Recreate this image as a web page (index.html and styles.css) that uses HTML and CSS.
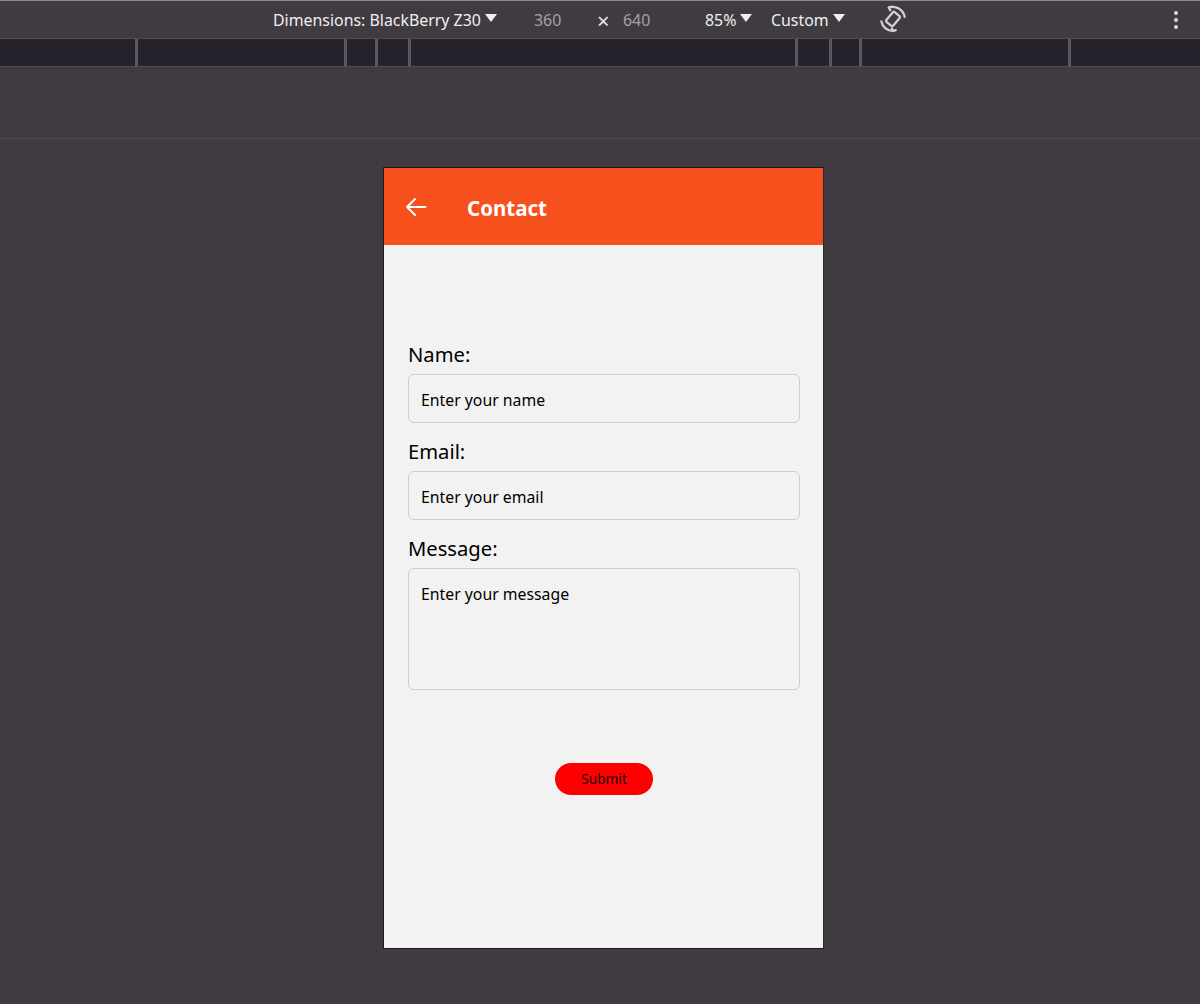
FILE: index.html
```html
<!DOCTYPE html>
<html lang="en">
<head>
<meta charset="utf-8">
<title>Contact</title>
<link rel="stylesheet" href="styles.css">
</head>
<body>
<header class="toolbar">
  <span class="tool tool-device">Dimensions: BlackBerry Z30<i class="caret"></i></span>
  <span class="dim dim-w">360</span>
  <span class="times">×</span>
  <span class="dim dim-h">640</span>
  <span class="tool tool-zoom">85%<i class="caret"></i></span>
  <span class="tool tool-throttle">Custom<i class="caret"></i></span>
  <svg class="rotate" width="26" height="28" viewBox="0 0 26 28" fill="none" stroke="#d2d0d3" stroke-width="2.3" stroke-linecap="round" stroke-linejoin="round">
    <rect x="8.6" y="7.6" width="8.8" height="12.8" rx="1.6" transform="rotate(40 13 14)"/>
    <path d="M8.8 2.6A12 12 0 0 1 24.6 11.8"/>
    <path d="M1.4 16.4A12 12 0 0 0 13.2 26"/>
    <path d="M11.6 1.6L8.8 2.6l1.4 2.6"/>
    <path d="M15.8 25.2L13.2 26l-1.2-2.6"/>
  </svg>
  <span class="more"><i></i><i></i><i></i></span>
</header>
<div class="ruler">
  <span class="seg seg-1"></span><span class="seg seg-2"></span><span class="seg seg-3"></span><span class="seg seg-4"></span><span class="seg seg-5"></span><span class="seg seg-6"></span><span class="seg seg-7"></span><span class="seg seg-8"></span>
</div>
<div class="spacer"></div>
<main class="stage">
  <section class="phone">
    <div class="appbar">
      <svg class="back" width="22" height="20" viewBox="0 0 22 20" fill="none" stroke="#fff" stroke-width="2" stroke-linecap="round" stroke-linejoin="round">
        <path d="M20.5 10H2M10 2l-8 8 8 8"/>
      </svg>
      <h1 class="title">Contact</h1>
    </div>
    <form class="form">
      <label class="label">Name:</label>
      <div class="field">Enter your name</div>
      <label class="label">Email:</label>
      <div class="field">Enter your email</div>
      <label class="label">Message:</label>
      <div class="field field-area">Enter your message</div>
      <div class="actions"><span class="submit">Submit</span></div>
    </form>
  </section>
</main>
</body>
</html>
```
FILE: styles.css
```css
* { box-sizing: border-box; }
html, body { margin: 0; height: 1004px; overflow: hidden; }
body { background: #3f3b40; font-family: "Noto Sans", "Open Sans", sans-serif; }

.toolbar {
  height: 39px;
  display: flex;
  align-items: center;
  padding: 0 0 0 273px;
  border-top: 1px solid #8d8b8f;
  border-bottom: 1px solid #4f4c51;
  color: #f0eff0;
  font-size: 15.9px;
}
.tool { display: flex; align-items: center; white-space: nowrap; }
.caret {
  display: block;
  width: 0; height: 0;
  margin: -3px 0 0 4px;
  border-left: 6px solid transparent;
  border-right: 6px solid transparent;
  border-top: 8px solid #f0eff0;
}
.tool-device { width: 261px; flex: none; }
.dim { color: #a3a1a5; flex: none; }
.dim-w { width: 63px; }
.times { color: #e8e7e9; width: 26px; flex: none; font-size: 22px; line-height: 20px; }
.dim-h { width: 82px; }
.tool-zoom { width: 66px; flex: none; }
.tool-throttle { width: 109px; flex: none; }
.rotate { flex: none; margin-top: -1px; }
.more { margin-left: 268px; display: flex; flex-direction: column; gap: 3px; }
.more i { display: block; width: 4px; height: 4px; border-radius: 50%; background: #d8d6d9; }

.ruler {
  height: 28px;
  display: flex;
  background: #26232c;
  border-bottom: 1px solid #4f4c51;
}
.seg { flex: none; border-right: 3px solid #5c5a60; height: 100%; }
.seg-1 { width: 138px; }
.seg-2 { width: 209px; }
.seg-3 { width: 31px; }
.seg-4 { width: 33px; }
.seg-5 { width: 387px; }
.seg-6 { width: 34px; }
.seg-7 { width: 30px; }
.seg-8 { width: 209px; }

.spacer { height: 72px; border-bottom: 1px solid #4f4c51; }

.stage { padding: 28px 0 0 383px; }
.phone {
  width: 441px;
  height: 782px;
  background: #f2f2f2;
  border: 1px solid #1c1a1e;
  border-right-color: #2a282c;
}
.appbar {
  height: 77px;
  background: #f6511d;
  display: flex;
  align-items: center;
  padding-left: 21px;
}
.back { flex: none; }
.title {
  margin: 2px 0 0 40px;
  color: #fff;
  font-size: 20.5px;
  font-weight: 700;
  line-height: 28px;
}

.form { padding: 94px 23px 0 24px; display: flex; flex-direction: column; color: #000; }
.label { font-size: 20.2px; line-height: 30px; height: 30px; margin-bottom: 5px; }
.field {
  height: 49px;
  margin-bottom: 13px;
  padding: 13px 12px 0;
  border: 1px solid #cdcdcd;
  border-radius: 6px;
  font-size: 15.8px;
  line-height: 24px;
}
.field-area { height: 122px; margin-bottom: 0; }
.actions { display: flex; justify-content: center; margin-top: 73px; }
.submit {
  width: 98px;
  height: 32px;
  border-radius: 16px;
  background: #ff0000;
  color: #1a0000;
  font-size: 13.7px;
  line-height: 32px;
  text-align: center;
}
```
